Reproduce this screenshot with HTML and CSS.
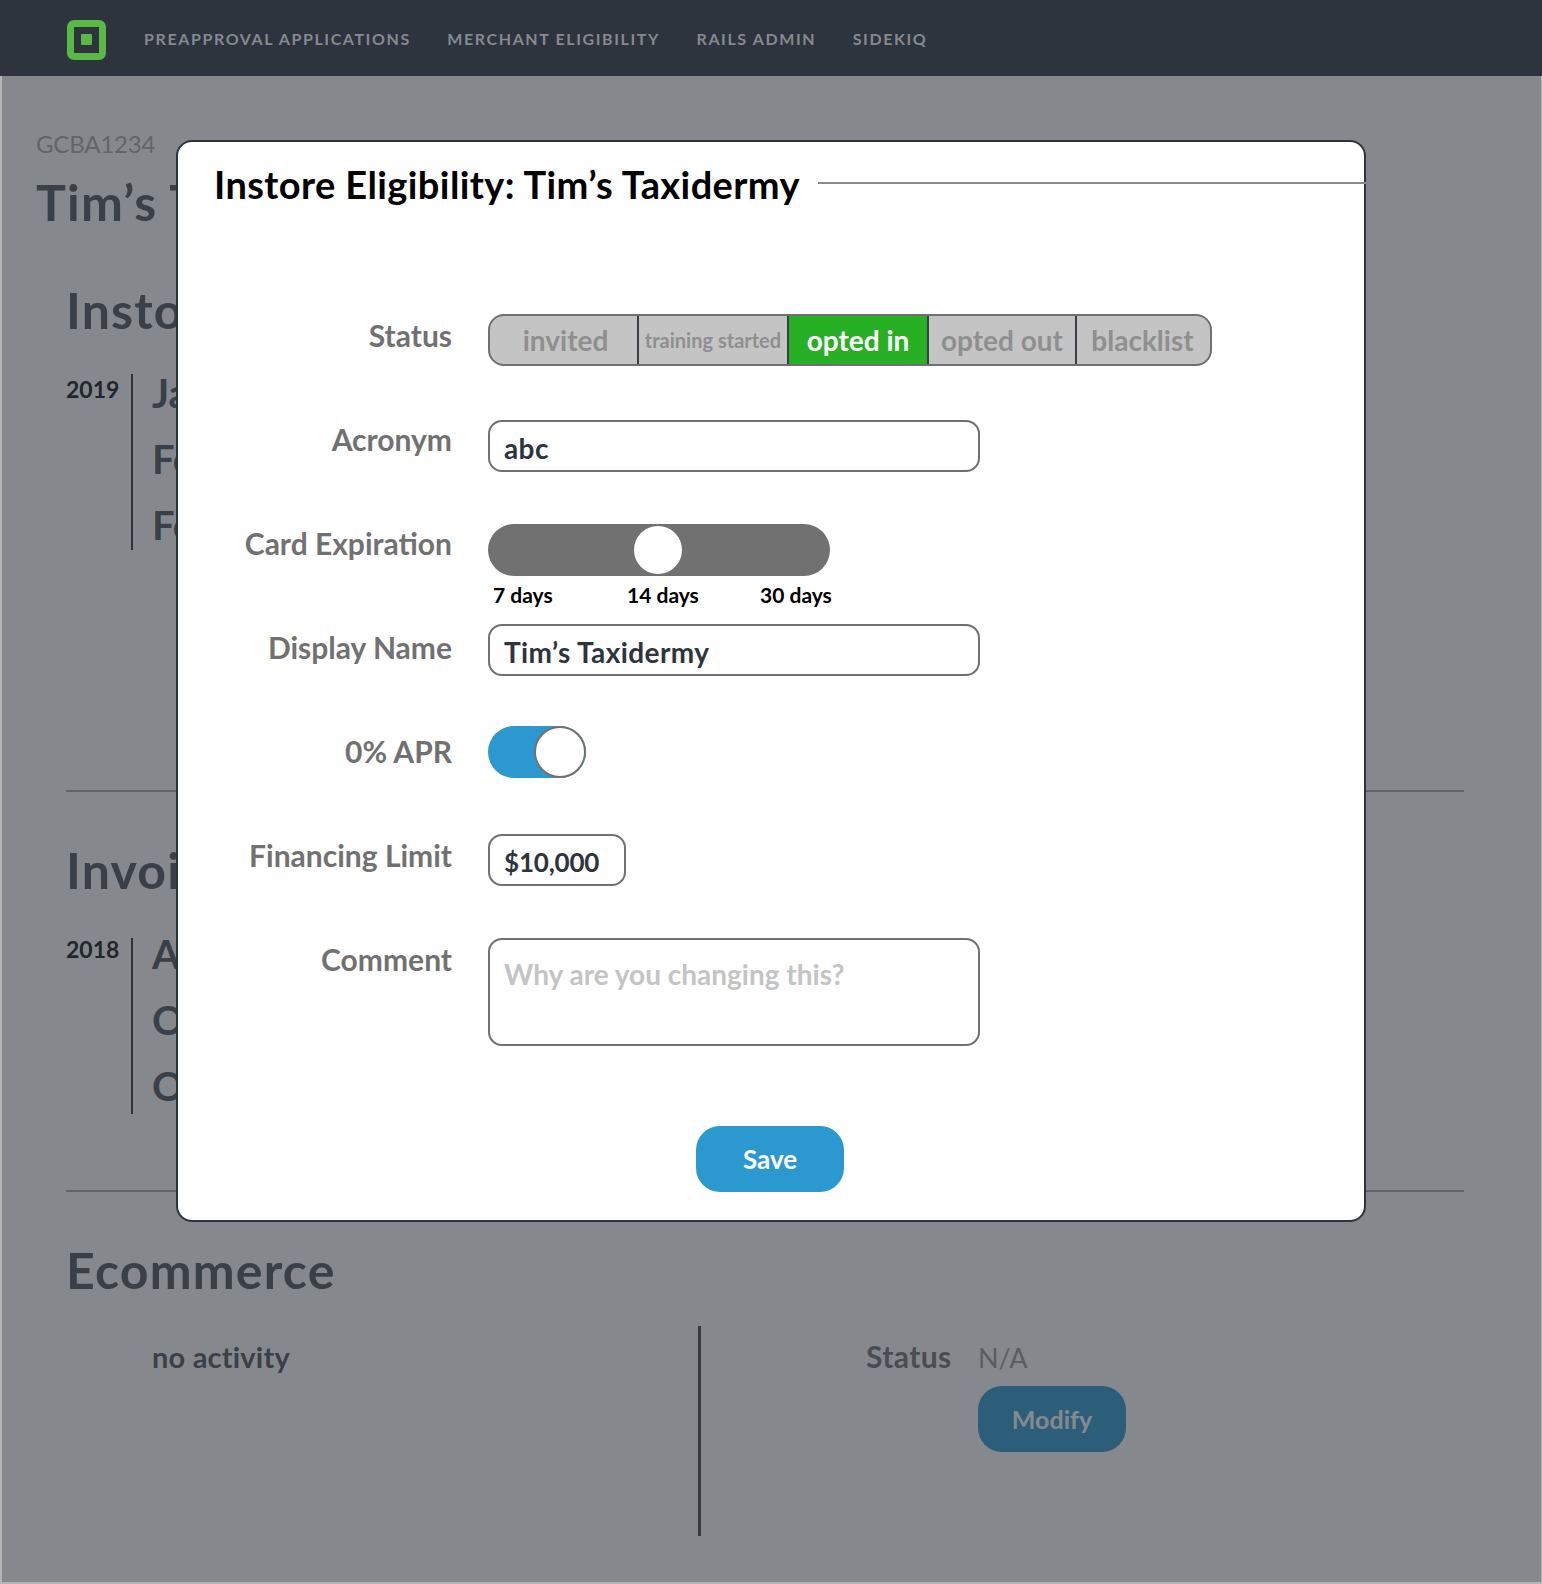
FILE: index.html
```html
<!DOCTYPE html>
<html lang="en">
<head>
    <title>Instore Eligibility</title>
    <meta charset="utf-8">
    <link rel="stylesheet" href="styles.css">
</head>
<body>

<nav class="topbar">
    <a class="logo" href="#"><span class="logo-dot"></span></a>
    <a class="nav-link" href="#">PREAPPROVAL APPLICATIONS</a>
    <a class="nav-link" href="#">MERCHANT ELIGIBILITY</a>
    <a class="nav-link" href="#">RAILS ADMIN</a>
    <a class="nav-link" href="#">SIDEKIQ</a>
</nav>

<main class="page">
    <p class="merchant-code">GCBA1234</p>
    <h1 class="merchant-name">Tim’s Taxidermy</h1>

    <section class="block">
        <h2 class="block-title">Instore Eligibility</h2>
        <div class="history">
            <div class="year">2019</div>
            <ul class="months">
                <li>January</li>
                <li>February</li>
                <li>February</li>
            </ul>
        </div>
    </section>
    <hr class="divider">

    <section class="block">
        <h2 class="block-title">Invoices</h2>
        <div class="history">
            <div class="year">2018</div>
            <ul class="months months-low">
                <li>April</li>
                <li>October</li>
                <li>October</li>
            </ul>
        </div>
    </section>
    <hr class="divider divider-short">

    <section class="block">
        <h2 class="block-title">Ecommerce</h2>
        <div class="ecom">
            <div class="ecom-left">no activity</div>
            <div class="ecom-right">
                <span class="ecom-label">Status</span>
                <div class="ecom-value">
                    <span class="ecom-na">N/A</span>
                    <a class="btn btn-modify" href="#">Modify</a>
                </div>
            </div>
        </div>
    </section>

    <div class="overlay">
        <div class="modal">
            <div class="modal-head">
                <h2 class="modal-title">Instore Eligibility: Tim’s Taxidermy</h2>
                <div class="modal-rule"></div>
            </div>

            <div class="modal-body">
                <ul class="labels">
                    <li>Status</li>
                    <li>Acronym</li>
                    <li>Card Expiration</li>
                    <li>Display Name</li>
                    <li>0% APR</li>
                    <li>Financing Limit</li>
                    <li>Comment</li>
                </ul>

                <div class="fields">
                    <div class="segments">
                        <div class="seg seg-invited">invited</div>
                        <div class="seg seg-training">training started</div>
                        <div class="seg seg-on">opted in</div>
                        <div class="seg seg-out">opted out</div>
                        <div class="seg seg-black">blacklist</div>
                    </div>

                    <input class="text-input" type="text" value="abc">

                    <div class="slider">
                        <div class="slider-track"><div class="slider-knob"></div></div>
                        <div class="slider-stops">
                            <span>7 days</span>
                            <span>14 days</span>
                            <span>30 days</span>
                        </div>
                    </div>

                    <input class="text-input text-input-name" type="text" value="Tim’s Taxidermy">

                    <div class="toggle"><div class="toggle-knob"></div></div>

                    <input class="text-input text-input-short" type="text" value="$10,000">

                    <textarea class="comment" placeholder="Why are you changing this?"></textarea>
                </div>
            </div>

            <div class="modal-foot">
                <a class="btn btn-save" href="#">Save</a>
            </div>
        </div>
    </div>
</main>

</body>
</html>
```

FILE: styles.css
```css
* {
    box-sizing: border-box;
}

html, body {
    margin: 0;
    padding: 0;
}

body {
    font-family: Lato, "Open Sans", sans-serif;
    color: #2d343d;
    background: white;
}

a {
    text-decoration: none;
}

ul {
    list-style: none;
    margin: 0;
    padding: 0;
}

/* top bar */

.topbar {
    display: flex;
    align-items: center;
    height: 76px;
    padding-left: 67px;
    background: #2d343d;
}

.logo {
    display: flex;
    align-items: center;
    justify-content: center;
    width: 39px;
    height: 40px;
    margin-top: 3px;
    margin-right: 38px;
    border: 7px solid #5ab946;
    border-radius: 7px;
}

.logo-dot {
    width: 11px;
    height: 11px;
    border-radius: 1px;
    background: #5ab946;
}

.nav-link {
    margin-right: 36.5px;
    font-size: 16px;
    font-weight: 700;
    letter-spacing: 1.6px;
    color: #86898e;
}

/* page behind the modal */

.page {
    position: relative;
    height: 1508px;
    padding: 53px 0 0 34px;
    overflow: hidden;
    border-left: 2px solid #b5b5b5;
    border-right: 1px solid #b5b5b5;
    border-bottom: 2px solid #b5b5b5;
}

.merchant-code {
    margin: 0;
    font-size: 24px;
    letter-spacing: -0.2px;
    line-height: 30px;
    color: #aaa;
}

.merchant-name {
    margin: 13px 0 0;
    font-size: 50px;
    font-weight: 700;
    letter-spacing: 1.2px;
    line-height: 60px;
    white-space: nowrap;
    color: #4a515a;
}

.block {
    margin-top: 48px;
    padding-left: 30px;
}

.block-title {
    margin: 0;
    font-size: 50px;
    font-weight: 700;
    letter-spacing: 1.2px;
    line-height: 60px;
    color: #4a515a;
}

.history {
    display: flex;
    margin-top: 34px;
}

.year {
    width: 65px;
    font-size: 23px;
    font-weight: 700;
    line-height: 30px;
    color: #111;
}

.months {
    height: 176px;
    padding-left: 19px;
    border-left: 2px solid #2d343d;
    font-size: 40px;
    font-weight: 700;
    color: #4a515a;
}

.months li {
    margin-bottom: 28px;
    line-height: 38px;
}

.months-low {
    margin-top: 4px;
}

.months-low li {
    margin-bottom: 34px;
    line-height: 32px;
}

.divider {
    width: 1398px;
    height: 2px;
    margin: 240px 0 0 30px;
    border: 0;
    background: #aaa;
}

.divider-short {
    margin-top: 76px;
}

.ecom {
    display: flex;
    height: 210px;
    margin-top: 26px;
}

.ecom-left {
    width: 632px;
    padding: 11px 0 0 86px;
    font-size: 29px;
    font-weight: 700;
    letter-spacing: 0.2px;
    line-height: 40px;
    color: #4a515a;
}

.ecom-right {
    display: flex;
    padding: 10px 0 0 165px;
    border-left: 3px solid #3a4149;
    font-size: 30px;
    line-height: 40px;
}

.ecom-label {
    width: 112px;
    font-weight: 700;
    letter-spacing: 0.4px;
    color: #717171;
}

.ecom-na {
    display: block;
    height: 40px;
    margin-bottom: 10px;
    padding-top: 2px;
    font-size: 27px;
    color: #999;
}

.btn {
    display: flex;
    align-items: center;
    justify-content: center;
    width: 148px;
    height: 66px;
    border-radius: 24px;
    font-size: 26px;
    font-weight: 700;
    color: white;
    background: #2b98d0;
}

.btn-modify {
    font-size: 25px;
}

/* modal */

.overlay {
    position: absolute;
    top: 0;
    left: 0;
    right: 0;
    bottom: 0;
    padding: 64px 0 0 174px;
    background: rgba(45, 52, 61, 0.58);
}

.modal {
    width: 1190px;
    padding-top: 19px;
    border: 2px solid #2d343d;
    border-radius: 16px;
    background: white;
}

.modal-head {
    display: flex;
    align-items: center;
    padding-left: 36px;
}

.modal-title {
    margin: 2px 18px 0 0;
    font-size: 38px;
    font-weight: 700;
    letter-spacing: 0.4px;
    line-height: 42px;
    color: black;
}

.modal-rule {
    flex: 1;
    height: 2px;
    margin-right: -2px;
    background: #8a8a8a;
}

.modal-body {
    display: flex;
    margin-top: 109px;
}

.labels {
    width: 274px;
    margin-top: 3px;
    margin-right: 36px;
    text-align: right;
    font-size: 30px;
    font-weight: 700;
    color: #717171;
}

.labels li {
    height: 36px;
    margin-bottom: 68px;
    line-height: 36px;
}

.fields {
    display: flex;
    flex-direction: column;
    align-items: flex-start;
}

.segments {
    display: flex;
    height: 52px;
    margin-bottom: 54px;
    overflow: hidden;
    border: 2px solid #717171;
    border-radius: 16px;
    background: #c4c4c4;
}

.seg {
    display: flex;
    align-items: center;
    justify-content: center;
    border-left: 2px solid #3a3f46;
    font-size: 28px;
    font-weight: 700;
    color: #8f8f8f;
}

.seg-invited {
    width: 147px;
    padding-left: 4px;
    border-left: 0;
}

.seg-training {
    width: 150px;
    font-size: 20px;
}

.seg-on {
    width: 140px;
    color: white;
    background: #27b024;
}

.seg-out {
    width: 148px;
}

.seg-black {
    width: 135px;
    padding-right: 2px;
}

.text-input {
    width: 492px;
    height: 52px;
    margin-bottom: 52px;
    padding: 4px 14px 0;
    border: 2px solid #717171;
    border-radius: 14px;
    outline: none;
    font-family: inherit;
    font-size: 28px;
    font-weight: 700;
    letter-spacing: 0.4px;
    color: #2d343d;
    background: white;
}

.text-input-name {
    margin-bottom: 50px;
}

.text-input-short {
    width: 138px;
    font-size: 26px;
    letter-spacing: -0.2px;
}

.slider {
    width: 350px;
    height: 100px;
}

.slider-track {
    display: flex;
    align-items: center;
    justify-content: center;
    width: 342px;
    height: 52px;
    border-radius: 26px;
    background: #717171;
}

.slider-knob {
    width: 48px;
    height: 48px;
    margin-right: 2px;
    border-radius: 50%;
    background: white;
}

.slider-stops {
    display: grid;
    grid-template-columns: 134px 133px auto;
    margin-top: 6px;
    padding-left: 5px;
    font-size: 21px;
    font-weight: 700;
    line-height: 26px;
    color: black;
}

.toggle {
    display: flex;
    justify-content: flex-end;
    width: 98px;
    height: 52px;
    margin-bottom: 56px;
    border-radius: 26px;
    background: #2b98d0;
}

.toggle-knob {
    width: 52px;
    height: 52px;
    border: 2px solid #717171;
    border-radius: 50%;
    background: white;
}

.comment {
    display: block;
    width: 492px;
    height: 108px;
    padding: 17px 14px;
    resize: none;
    border: 2px solid #717171;
    border-radius: 14px;
    outline: none;
    font-family: inherit;
    font-size: 28px;
    font-weight: 700;
}

.comment::placeholder {
    color: #c4c4c4;
    opacity: 1;
}

.modal-foot {
    display: flex;
    justify-content: center;
    margin-top: 80px;
    padding-right: 2px;
    padding-bottom: 28px;
}
```
